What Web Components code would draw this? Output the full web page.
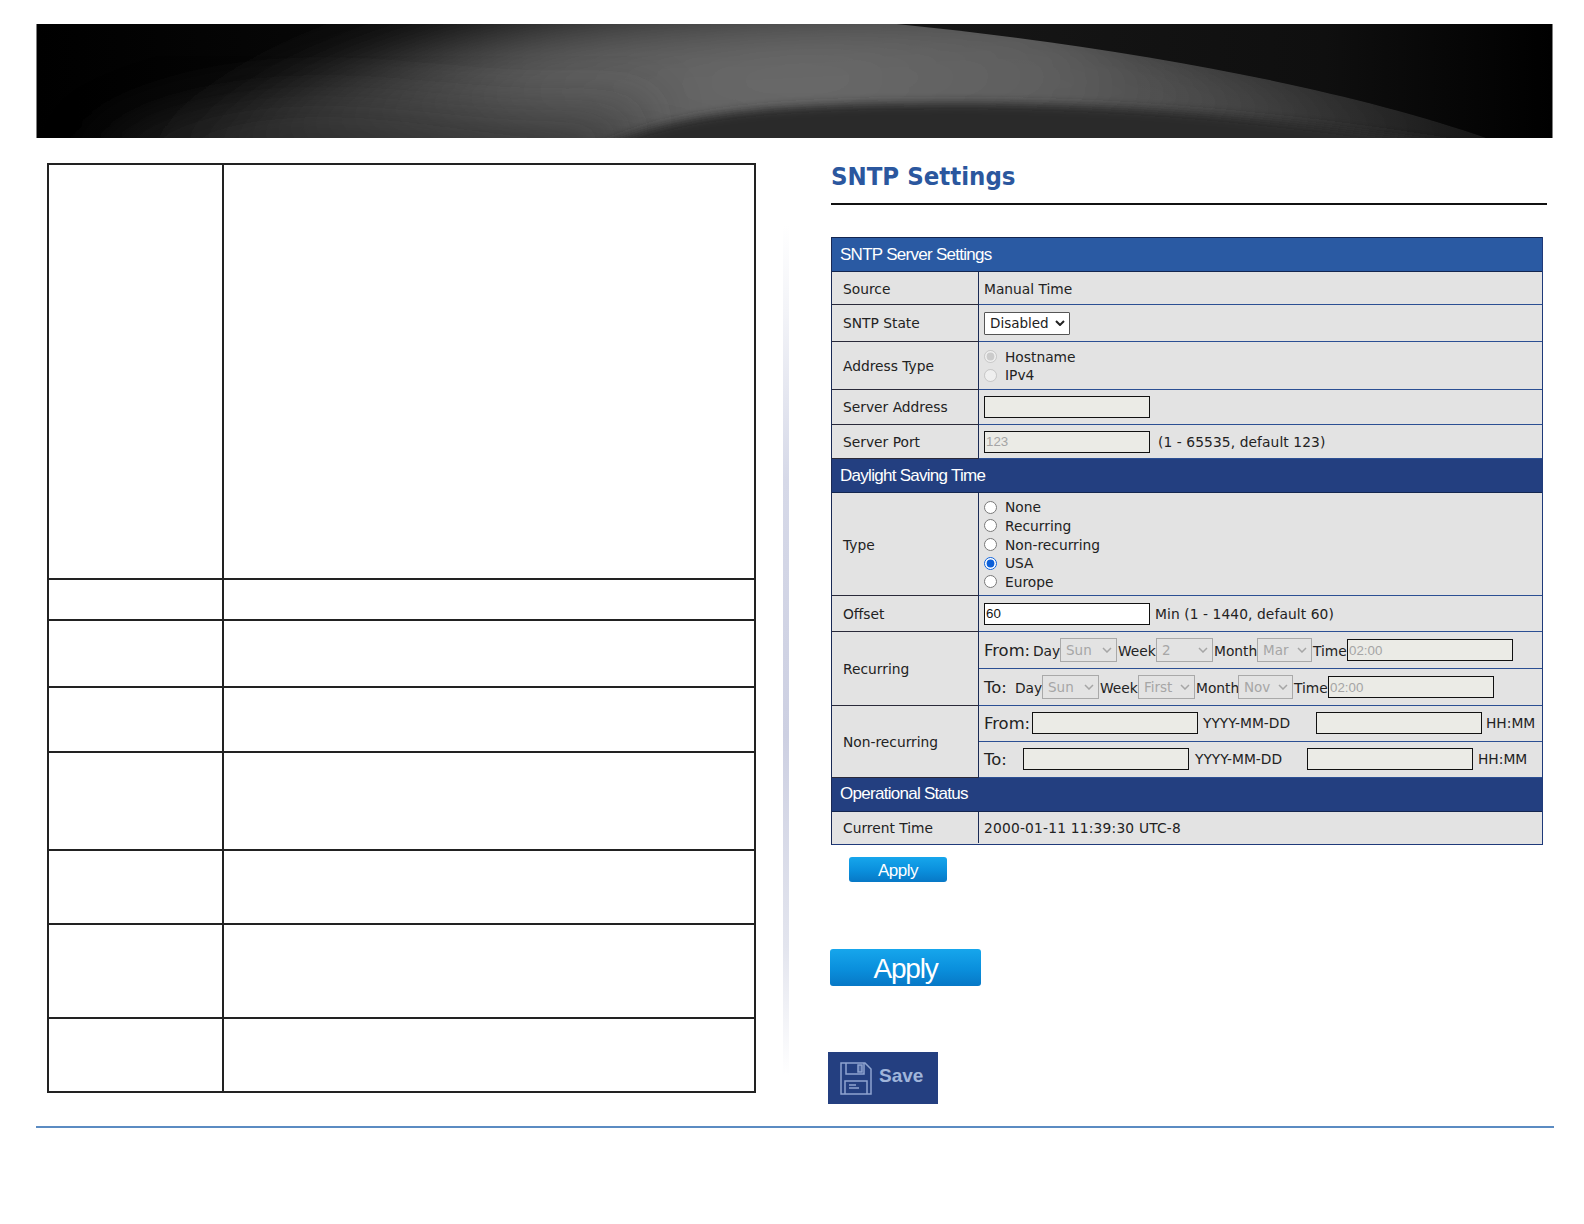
<!DOCTYPE html>
<html>
<head>
<meta charset="utf-8">
<title>SNTP Settings</title>
<style>
  html, body { margin: 0; background: #fff; }
</style>
</head>
<body>
<manual-page>
  <banner-art slot="banner"></banner-art>
  <blank-table slot="left"></blank-table>
  <page-title>SNTP Settings</page-title>

  <sntp-panel>
    <panel-head first>SNTP Server Settings</panel-head>
    <panel-row label="Source" h="33"><span-text>Manual Time</span-text></panel-row>
    <panel-row label="SNTP State" h="37" raise><drop-box value="Disabled" w="86" live></drop-box></panel-row>
    <panel-row label="Address Type" h="48" raise>
      <radio-list off items="Hostname*,IPv4"></radio-list>
    </panel-row>
    <panel-row label="Server Address" h="35" raise><text-box w="166"></text-box></panel-row>
    <panel-row label="Server Port" h="34"><text-box w="166" value="123" dim></text-box><span-text gap="8" mid>(1 - 65535, default 123)</span-text></panel-row>
    <panel-head dark>Daylight Saving Time</panel-head>
    <panel-row label="Type" h="103">
      <radio-list items="None,Recurring,Non-recurring,USA*,Europe"></radio-list>
    </panel-row>
    <panel-row label="Offset" h="36"><text-box w="166" value="60" white></text-box><span-text gap="5" mid>Min (1 - 1440, default 60)</span-text></panel-row>
    <panel-row label="Recurring" lines>
      <sub-line>
        <big-word w="49">From:</big-word><span-text w="27">Day</span-text><drop-box value="Sun" w="57"></drop-box>
        <span-text gap="1" w="38">Week</span-text><drop-box value="2" w="57"></drop-box>
        <span-text gap="1" w="43">Month</span-text><drop-box value="Mar" w="55"></drop-box>
        <span-text gap="1" w="34">Time</span-text><text-box w="166" value="02:00" dim></text-box>
      </sub-line>
      <sub-line>
        <big-word w="31">To:</big-word><span-text w="27">Day</span-text><drop-box value="Sun" w="57"></drop-box>
        <span-text gap="1" w="38">Week</span-text><drop-box value="First" w="57"></drop-box>
        <span-text gap="1" w="42">Month</span-text><drop-box value="Nov" w="55"></drop-box>
        <span-text gap="1" w="34">Time</span-text><text-box w="166" value="02:00" dim></text-box>
      </sub-line>
    </panel-row>
    <panel-row label="Non-recurring" lines>
      <sub-line short>
        <big-word w="48">From:</big-word><text-box w="166"></text-box>
        <span-text gap="5" w="113">YYYY-MM-DD</span-text><text-box w="166"></text-box><span-text gap="4">HH:MM</span-text>
      </sub-line>
      <sub-line short>
        <big-word w="39">To:</big-word><text-box w="166"></text-box>
        <span-text gap="6" w="112">YYYY-MM-DD</span-text><text-box w="166"></text-box><span-text gap="5">HH:MM</span-text>
      </sub-line>
    </panel-row>
    <panel-head dark raise>Operational Status</panel-head>
    <panel-row label="Current Time" h="33" last><span-text wide>2000-01-11 11:39:30 UTC-8</span-text></panel-row>
  </sntp-panel>

  <apply-button size="small"></apply-button>
  <apply-button size="big"></apply-button>
  <save-button></save-button>
</manual-page>

<script>
const FONT = `"DejaVu Sans", Verdana, sans-serif`;

class ManualPage extends HTMLElement {
  constructor() {
    super();
    this.attachShadow({ mode: "open" }).innerHTML = `
      <style>
        :host { display: block; width: 1584px; height: 1224px; overflow: hidden; }
        .banner { margin: 24px 0 0 36px; width: 1517px; height: 114px; }
        .main { display: flex; align-items: flex-start; margin-top: 25px; }
        .left { margin-left: 47px; }
        .shade {
          width: 6px; height: 850px; margin: 62px 0 0 27px;
          background: linear-gradient(#fff 0, #f3f4f8 10%, #d6d9e8 30%, #cdd0e2 60%, #e3e5ee 85%, #fff 100%);
        }
        .right { margin-left: 39px; width: 720px; display: flex; flex-direction: column; align-items: flex-start; }
        .foot { height: 2px; margin: 22px 0 0 36px; width: 1518px; background: #5b8bc2; }
      </style>
      <div class="banner"><slot name="banner"></slot></div>
      <div class="main">
        <div class="left"><slot name="left"></slot></div>
        <div class="shade"></div>
        <div class="right"><slot></slot></div>
      </div>
      <div class="foot"></div>`;
  }
}

class BannerArt extends HTMLElement {
  constructor() {
    super();
    this.attachShadow({ mode: "open" }).innerHTML = `
      <style>:host { display: block; height: 114px; } svg { display: block; }</style>
      <svg width="1517" height="114" viewBox="0 0 1516 114">
        <defs>
          <linearGradient id="base" x1="0" x2="1" y1="0" y2="0">
            <stop offset="0" stop-color="#000"/>
            <stop offset=".6" stop-color="#161616"/>
            <stop offset=".85" stop-color="#0f0f0f"/>
            <stop offset="1" stop-color="#000"/>
          </linearGradient>
          <radialGradient id="lit" gradientUnits="userSpaceOnUse" cx="760" cy="50" r="760" gradientTransform="translate(0 30) scale(1 .4)">
            <stop offset="0" stop-color="#6b6b6b"/>
            <stop offset=".35" stop-color="#5e5e5e"/>
            <stop offset=".65" stop-color="#3f3f3f"/>
            <stop offset="1" stop-color="#0a0a0a"/>
          </radialGradient>
          <linearGradient id="edge" gradientUnits="userSpaceOnUse" x1="1100" x2="1430" y1="0" y2="0">
            <stop offset="0" stop-color="#626262" stop-opacity="0"/>
            <stop offset="1" stop-color="#1a1a1a" stop-opacity=".9"/>
          </linearGradient>
          <filter id="soft" x="-10%" y="-40%" width="120%" height="180%"><feGaussianBlur stdDeviation="5"/></filter>
          <filter id="softer" x="-20%" y="-60%" width="140%" height="220%"><feGaussianBlur stdDeviation="30"/></filter>
          <clipPath id="dome"><path d="M860 0C1080 22 1300 62 1450 114H0V0Z"/></clipPath>
        </defs>
        <rect width="1516" height="114" fill="url(#base)"/>
        <g clip-path="url(#dome)">
          <path d="M110 150C210 70 380 10 600 -10L1000 -30L1500 130Z" fill="url(#lit)" filter="url(#softer)"/>
          <path d="M860 0C1080 22 1300 62 1450 114H1000L900 0Z" fill="url(#edge)"/>
          <path d="M60 130C140 80 250 70 360 80C450 88 560 100 620 80L560 150H60Z" fill="#333" opacity=".7" filter="url(#softer)"/>
          <path d="M560 125C620 96 700 84 800 81C960 76 1160 78 1440 125Z" fill="#2a2a2a" filter="url(#soft)"/>
        </g>
      </svg>`;
  }
}

class BlankTable extends HTMLElement {
  constructor() {
    super();
    const heights = [415, 41, 67, 65, 98, 74, 94, 74];
    const rows = heights.map((h) =>
      `<div class="row" style="height:${h}px"><div class="a"></div><div class="b"></div></div>`).join("");
    this.attachShadow({ mode: "open" }).innerHTML = `
      <style>
        :host { display: block; width: 709px; box-sizing: border-box; border: 2px solid #222; border-bottom: 0; }
        .row { display: flex; box-sizing: border-box; border-bottom: 2px solid #222; }
        .a { width: 173px; border-right: 2px solid #222; }
        .b { flex: 1; }
      </style>${rows}`;
  }
}

class PageTitle extends HTMLElement {
  constructor() {
    super();
    this.attachShadow({ mode: "open" }).innerHTML = `
      <style>
        :host {
          display: block; box-sizing: border-box; margin-left: 3px; width: 716px; height: 42px;
          border-bottom: 2px solid #111; color: #2b579e;
          font-family: "DejaVu Sans Condensed", "DejaVu Sans", sans-serif;
          font-stretch: condensed; font-weight: bold; font-size: 25.5px; line-height: 26px;
        }
      </style><slot></slot>`;
  }
}

class SntpPanel extends HTMLElement {
  constructor() {
    super();
    this.attachShadow({ mode: "open" }).innerHTML = `
      <style>
        :host {
          display: block; box-sizing: border-box; margin: 32px 0 0 3px; width: 712px;
          border-left: 1px solid #1a2a55; border-right: 1px solid #1f3a7a; border-bottom: 1px solid #1f3a7a;
        }
      </style><slot></slot>`;
  }
}

class PanelHead extends HTMLElement {
  constructor() {
    super();
    this.attachShadow({ mode: "open" }).innerHTML = `
      <style>
        :host {
          display: flex; align-items: center; box-sizing: border-box; height: 34px; padding-left: 8px;
          background: #2a5aa3; border-top: 1px solid #14264f; border-bottom: 1px solid #14264f;
          color: #fff; font: 17px "Liberation Sans", Arial, sans-serif; letter-spacing: -.72px;
        }
        :host([first]) { height: 35px; }
        :host([dark]) { background: #233f80; border-top: 0; }
        :host([raise]) { padding-bottom: 1px; }
      </style><slot></slot>`;
  }
}

class PanelRow extends HTMLElement {
  constructor() {
    super();
    const h = this.getAttribute("h");
    this.attachShadow({ mode: "open" }).innerHTML = `
      <style>
        :host {
          display: flex; box-sizing: border-box; background: #e3e3e3; color: #222;
          font: 13.8px ${FONT};
          ${h ? `height: ${h}px;` : ""}
        }
        :host([last]) { height: 32px; padding-bottom: 1px; }
        .label {
          width: 147px; flex: none; box-sizing: border-box; padding: 1px 0 0 11px;
          display: flex; align-items: center; border-right: 1px solid #1a2a55;
          border-bottom: 1px solid #2a2a3a;
        }
        :host([raise]) .label { padding-top: 0; }
        .value {
          flex: 1; display: flex; align-items: center; box-sizing: border-box;
          padding-left: 5px; border-bottom: 1px solid #2c4f93;
        }
        :host([lines]) .value { display: block; padding-left: 0; border-bottom: 0; }
        :host([last]) .label, :host([last]) .value { border-bottom: 0; }
      </style>
      <div class="label"></div>
      <div class="value"><slot></slot></div>`;
    this.shadowRoot.querySelector(".label").textContent = this.getAttribute("label");
  }
}

class SubLine extends HTMLElement {
  constructor() {
    super();
    this.attachShadow({ mode: "open" }).innerHTML = `
      <style>
        :host {
          display: flex; align-items: center; box-sizing: border-box; height: 37px;
          padding-left: 5px; border-bottom: 1px solid #2c4f93;
        }
        :host([short]) { height: 36px; padding-bottom: 2px; }
      </style><slot></slot>`;
  }
}

class SpanText extends HTMLElement {
  constructor() {
    super();
    const gap = this.getAttribute("gap") || 0;
    const w = this.getAttribute("w");
    this.attachShadow({ mode: "open" }).innerHTML = `
      <style>
        :host {
          display: block; flex: none; margin-left: ${gap}px; padding-top: 1px; white-space: nowrap;
          ${w ? `width: ${w}px;` : ""}
        }
        :host([wide]) { letter-spacing: .2px; }
        :host([mid]) { letter-spacing: .09px; }
      </style><slot></slot>`;
  }
}

class BigWord extends HTMLElement {
  constructor() {
    super();
    this.attachShadow({ mode: "open" }).innerHTML = `
      <style>
        :host {
          display: block; flex: none; width: ${this.getAttribute("w")}px;
          font-size: 16.4px; white-space: nowrap; padding-top: 1px;
        }
      </style><slot></slot>`;
  }
}

class TextBox extends HTMLElement {
  constructor() {
    super();
    const w = this.getAttribute("w");
    const bg = this.hasAttribute("white") ? "#fff" : "#ebebe6";
    const colour = this.hasAttribute("dim") ? "#a5a5a5" : "#111";
    this.attachShadow({ mode: "open" }).innerHTML = `
      <style>
        :host { display: block; flex: none; width: ${w}px; height: 22px; }
        input {
          display: block; box-sizing: border-box; width: 100%; height: 100%; margin: 0; padding: 0 1px;
          border: 1px solid #111; background: ${bg}; color: ${colour}; border-radius: 0;
          font: 13.3px "Liberation Sans", Arial, sans-serif; outline: 0;
        }
      </style><input type="text">`;
    this.shadowRoot.querySelector("input").setAttribute("value", this.getAttribute("value") || "");
  }
}

class DropBox extends HTMLElement {
  constructor() {
    super();
    const live = this.hasAttribute("live");
    const v = this.getAttribute("value");
    this.attachShadow({ mode: "open" }).innerHTML = `
      <style>
        :host { display: block; flex: none; width: ${this.getAttribute("w")}px; height: ${live ? 23 : 24}px; }
        .box {
          box-sizing: border-box; width: 100%; height: 100%; padding-left: 5px;
          display: flex; align-items: center; justify-content: space-between;
          border: 1px solid ${live ? "#555" : "#a9a9a9"}; background: ${live ? "#fff" : "#e3e3e3"};
          color: ${live ? "#222" : "#a6a6a6"}; font: 13.5px ${FONT};
          border-radius: ${live ? "1px" : "0"};
        }
        svg { margin-right: 4px; flex: none; }
      </style>
      <div class="box"><span>${v}</span>
        <svg width="10" height="6" viewBox="0 0 10 6"><path d="M1 1l4 4 4-4" fill="none" stroke="${live ? "#222" : "#a6a6a6"}" stroke-width="${live ? 2 : 1.5}"/></svg>
      </div>`;
  }
}

class RadioList extends HTMLElement {
  constructor() {
    super();
    const off = this.hasAttribute("off");
    const items = this.getAttribute("items").split(",").map((s) => {
      const on = s.endsWith("*");
      return `<label><input type="radio" ${on ? "checked" : ""} ${off ? "disabled" : ""}><span>${s.replace("*", "")}</span></label>`;
    }).join("");
    this.attachShadow({ mode: "open" }).innerHTML = `
      <style>
        :host { display: block; padding-top: 1px; }
        label { display: flex; align-items: center; height: 18.6px; }
        input { width: 13px; height: 13px; margin: 0 8px 0 0; accent-color: #0b5fd8; }
      </style>${items}`;
  }
}

class ApplyButton extends HTMLElement {
  constructor() {
    super();
    this.attachShadow({ mode: "open" }).innerHTML = `
      <style>
        :host {
          display: flex; align-items: center; justify-content: center; box-sizing: border-box;
          color: #fff; font-family: "Liberation Sans", Arial, sans-serif;
          background: linear-gradient(#16a6ec, #0a8fdc 55%, #0778c6);
          border-radius: 3px;
        }
        :host([size=small]) {
          width: 98px; height: 25px; margin: 12px 0 0 21px; padding-top: 2px;
          font-size: 17px; letter-spacing: -.5px;
        }
        :host([size=big]) {
          width: 151px; height: 37px; margin: 67px 0 0 2px; padding-top: 3px;
          font-size: 28px; letter-spacing: -1.2px;
        }
      </style>Apply`;
  }
}

class SaveButton extends HTMLElement {
  constructor() {
    super();
    this.attachShadow({ mode: "open" }).innerHTML = `
      <style>
        :host {
          display: flex; align-items: center; box-sizing: border-box; width: 110px; height: 52px;
          margin-top: 66px; padding-left: 12px; background: #243f80; color: #a0b5da;
          font: bold 19px "Liberation Sans", Arial, sans-serif;
        }
        svg { margin-right: 7px; }
        span { margin-top: -5px; }
      </style>
      <svg width="32" height="33" viewBox="0 0 32 33" fill="none" stroke="#8ea4cf" stroke-width="1.5">
        <path d="M1 1H25L31 7V32H1Z"/>
        <path d="M6 1V12H24V1"/>
        <path d="M18 3V10H22V3Z" fill="#8ea4cf" fill-opacity=".4"/>
        <path d="M5 32V19H27V32"/>
        <path d="M9 23H16M9 26H19"/>
      </svg>
      <span>Save</span>`;
  }
}

customElements.define("manual-page", ManualPage);
customElements.define("banner-art", BannerArt);
customElements.define("blank-table", BlankTable);
customElements.define("page-title", PageTitle);
customElements.define("sntp-panel", SntpPanel);
customElements.define("panel-head", PanelHead);
customElements.define("panel-row", PanelRow);
customElements.define("sub-line", SubLine);
customElements.define("span-text", SpanText);
customElements.define("big-word", BigWord);
customElements.define("text-box", TextBox);
customElements.define("drop-box", DropBox);
customElements.define("radio-list", RadioList);
customElements.define("apply-button", ApplyButton);
customElements.define("save-button", SaveButton);
</script>
</body>
</html>
